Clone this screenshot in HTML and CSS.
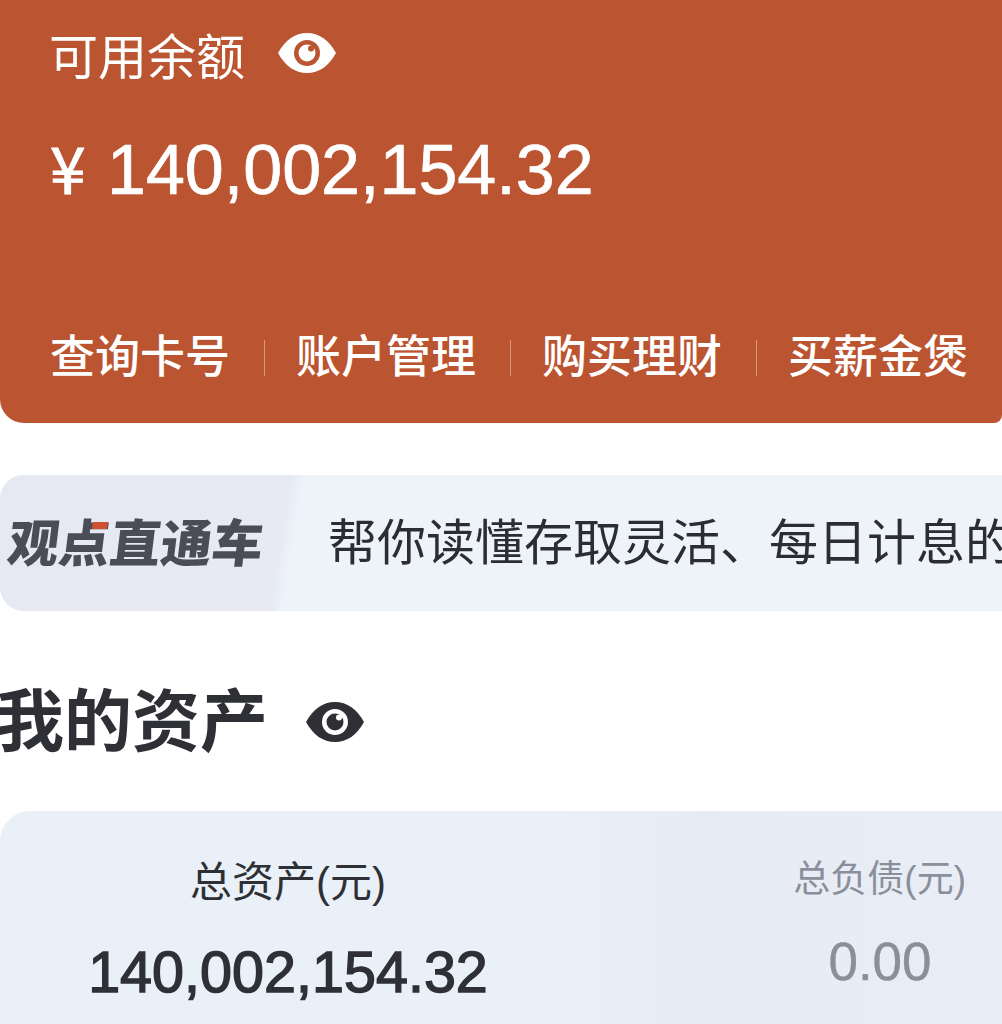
FILE: index.html
```html
<!DOCTYPE html>
<html lang="zh-CN">
<head>
<meta charset="utf-8">
<title>我的资产</title>
<link rel="stylesheet" href="styles.css">
</head>
<body>
<main class="page">
  <section class="hero">
    <div class="hero-label">
      <span>可用余额</span>
      <svg class="eye eye-light" viewBox="0 0 58 40"><path d="M0 20C7 7 17 0 29 0s22 7 29 20c-7 13-17 20-29 20S7 33 0 20z"/><circle class="ring" cx="29" cy="20" r="13"/><circle class="core" cx="29" cy="20" r="8.5"/><circle class="ring" cx="33" cy="15.5" r="3"/></svg>
    </div>
    <div class="balance"><span class="yen">¥</span><span class="amount">140,002,154.32</span></div>
    <nav class="actions">
      <span class="action">查询卡号</span><i class="sep"></i>
      <span class="action">账户管理</span><i class="sep"></i>
      <span class="action">购买理财</span><i class="sep"></i>
      <span class="action">买薪金煲</span>
    </nav>
  </section>
  <section class="banner">
    <div class="tag"><span class="tag-text">观点直通车<i class="tag-mark"></i></span></div>
    <div class="banner-text">帮你读懂存取灵活、每日计息的</div>
  </section>
  <h2 class="title">
    <span>我的资产</span>
    <svg class="eye eye-dark" viewBox="0 0 58 40"><path d="M0 20C7 7 17 0 29 0s22 7 29 20c-7 13-17 20-29 20S7 33 0 20z"/><circle class="ring" cx="29" cy="20" r="13"/><circle class="core" cx="29" cy="20" r="8.5"/><circle class="ring" cx="33" cy="15.5" r="3"/></svg>
  </h2>
  <section class="summary">
    <div class="col col-main">
      <div class="col-label">总资产(元)</div>
      <div class="col-value">140,002,154.32</div>
    </div>
    <div class="col col-debt">
      <div class="col-label">总负债(元)</div>
      <div class="col-value">0.00</div>
    </div>
  </section>
</main>
</body>
</html>
```
FILE: styles.css
```css
* { box-sizing: border-box; }
html, body { margin: 0; height: 100%; background: #fff; }
.page {
  width: 1002px;
  height: 1024px;
  overflow: hidden;
  font-family: "Liberation Sans", "Noto Sans CJK SC", sans-serif;
  color: #2e3036;
}
.hero {
  height: 423px;
  padding: 30px 0 0 50px;
  background: #bb5430;
  border-radius: 0 0 8px 24px;
  color: #fff;
}
.hero-label {
  display: flex;
  align-items: center;
  gap: 33px;
  height: 56px;
  margin-left: -1px;
  font-size: 49px;
  line-height: 56px;
}
.eye { width: 58px; height: 40px; flex: none; }
.hero-label .eye { margin-bottom: 10px; }
.eye-light path, .eye-light .core { fill: #fff; }
.eye-light .ring { fill: #bb5430; }
.eye-dark path, .eye-dark .core { fill: #2e3036; }
.eye-dark .ring { fill: #fff; }
.balance {
  display: flex;
  align-items: baseline;
  gap: 20px;
  margin-top: 40px;
  font-size: 70px;
  line-height: 80px;
}
.amount { -webkit-text-stroke: 0.7px #fff; }
.yen {
  width: 37px;
  font-family: "Noto Sans CJK SC", sans-serif;
  font-size: 64px;
  line-height: 80px;
  -webkit-text-stroke: 1px #fff;
}
.actions {
  display: flex;
  align-items: center;
  margin-top: 120px;
  font-size: 45px;
  line-height: 56px;
  font-weight: 500;
}
.action { width: 180px; flex: none; }
.sep {
  width: 1px;
  height: 36px;
  margin: 0 31px 0 34px;
  background: rgba(255, 255, 255, 0.4);
}
.banner {
  display: flex;
  align-items: center;
  height: 136px;
  margin-top: 52px;
  background: #eef3fa;
  border-radius: 24px 0 0 24px;
  overflow: hidden;
}
.tag {
  display: flex;
  align-items: center;
  flex: none;
  width: 328px;
  height: 100%;
  padding-left: 8px;
  background: linear-gradient(99deg, #e6e9f2 0, #e7eaf3 288px, #eef3fa 300px);
}
.tag-text {
  position: relative;
  display: block;
  width: 255px;
  margin-top: 4px;
  font-size: 51px;
  line-height: 60px;
  font-weight: 900;
  white-space: nowrap;
  color: #4a4d57;
  transform: skewX(-7deg);
}
.tag-mark {
  position: absolute;
  left: 82px;
  top: 7px;
  width: 15px;
  height: 7px;
  background: #d0512f;
}
.banner-text {
  flex: none;
  font-size: 49px;
  line-height: 60px;
  white-space: nowrap;
  color: #2b2d33;
}
.title {
  display: flex;
  align-items: center;
  gap: 38px;
  height: 90px;
  margin: 66px 0 0 -4px;
  font-size: 68px;
  line-height: 90px;
  font-weight: 700;
}
.summary {
  display: grid;
  grid-template-columns: 576px 1fr;
  height: 240px;
  margin-top: 44px;
  padding-top: 44px;
  background: linear-gradient(90deg, #eaf0f8 0, #eaf0f8 55%, #e6ebf4 70%, #e9eef6 100%);
  border-radius: 30px 0 0 0;
}
.col { display: flex; flex-direction: column; align-items: center; }
.col-debt { align-items: flex-end; padding-right: 36px; }
.col-main .col-label { font-size: 42px; line-height: 56px; }
.col-main .col-value {
  margin-top: 28px;
  font-size: 57.5px;
  line-height: 66px;
  -webkit-text-stroke: 1.4px #2e3036;
}
.col-debt .col-label { font-size: 37px; line-height: 50px; color: #8a8f9b; }
.col-debt .col-value {
  margin: 26px 0 0;
  width: 172px;
  text-align: center;
  font-size: 53px;
  line-height: 62px;
  color: #8a8f9b;
  -webkit-text-stroke: 0.4px #8a8f9b;
}
```
